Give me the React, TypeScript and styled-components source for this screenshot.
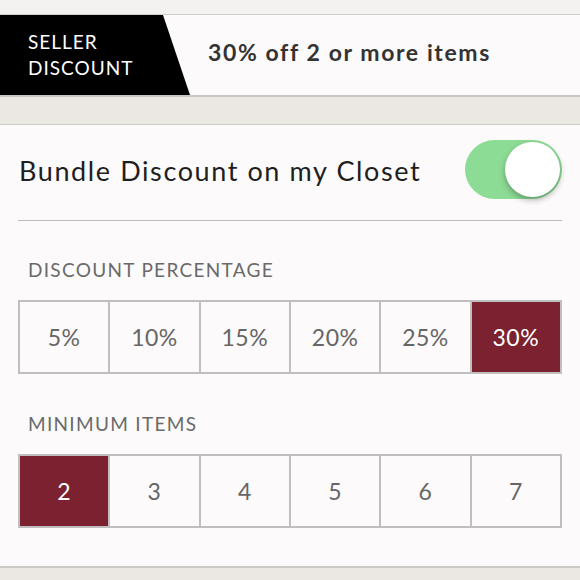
import React, { useState } from "react";
import styled, { createGlobalStyle } from "styled-components";

const GlobalStyle = createGlobalStyle`
  html, body {
    margin: 0;
    padding: 0;
    background: #ebe8e4;
    font-family: Lato, "Open Sans", sans-serif;
  }
`;

const Page = styled.div`
  width: 580px;
  height: 580px;
  overflow: hidden;
  display: flex;
  flex-direction: column;
`;

const TopStrip = styled.div`
  height: 14px;
  background: #f3f2f0;
  border-bottom: 1px solid #cfcdca;
`;

const Banner = styled.div`
  height: 80px;
  display: flex;
  align-items: center;
  background: #fcfafa;
  border-bottom: 2px solid #c9c7c4;
`;

const Tag = styled.div`
  width: 190px;
  height: 100%;
  box-sizing: border-box;
  padding-left: 28px;
  display: flex;
  flex-direction: column;
  justify-content: center;
  background: #000;
  color: #fff;
  font-size: 19px;
  line-height: 26px;
  letter-spacing: 1px;
  clip-path: polygon(0 0, 163px 0, 190px 100%, 0 100%);
`;

const Offer = styled.div`
  margin: 0 0 6px 18px;
  font-size: 23px;
  font-weight: 700;
  color: #333;
  letter-spacing: 1.6px;
`;

const Gap = styled.div`
  height: 27px;
`;

const Panel = styled.div`
  background: #fcfafa;
  border-top: 1px solid #cdcbc8;
  border-bottom: 2px solid #cdcbc8;
  padding: 0 18px 38px;
`;

const TitleRow = styled.div`
  height: 95px;
  display: flex;
  align-items: center;
  justify-content: space-between;
  border-bottom: 1px solid #bdbbbb;
`;

const Title = styled.div`
  margin-top: -5px;
  padding-left: 1px;
  font-size: 27px;
  color: #1e1e1e;
  letter-spacing: 1.6px;
`;

const Track = styled.button<{ $on: boolean }>`
  width: 97px;
  height: 59px;
  margin-top: -6px;
  border: none;
  padding: 0;
  border-radius: 30px;
  background: ${(p) => (p.$on ? "#8ddc95" : "#e0dede")};
  position: relative;
  cursor: pointer;
`;

const Knob = styled.span<{ $on: boolean }>`
  position: absolute;
  top: 2px;
  left: ${(p) => (p.$on ? "40px" : "2px")};
  width: 55px;
  height: 55px;
  border-radius: 50%;
  background: #fff;
  box-shadow: 0 3px 6px rgba(0, 0, 0, 0.3);
`;

const Label = styled.div<{ $top: number }>`
  margin: ${(p) => p.$top}px 0 20px 10px;
  font-size: 19px;
  line-height: 20px;
  color: #6a6a6a;
  letter-spacing: 1.3px;
`;

const Options = styled.div`
  display: grid;
  grid-template-columns: repeat(6, 1fr);
  gap: 2px;
  background: #c0bebe;
  border: 2px solid #c0bebe;
`;

const Option = styled.button<{ $active: boolean }>`
  height: 70px;
  border: none;
  padding: 0;
  background: ${(p) => (p.$active ? "#7b2130" : "#fcfafa")};
  color: ${(p) => (p.$active ? "#fff" : "#666")};
  font-family: inherit;
  font-size: 23px;
  letter-spacing: 0.5px;
  cursor: pointer;
`;

const percents = [5, 10, 15, 20, 25, 30];
const counts = [2, 3, 4, 5, 6, 7];

export default function App() {
  const [on, setOn] = useState(true);
  const [pct, setPct] = useState(30);
  const [min, setMin] = useState(2);

  return (
    <>
      <GlobalStyle />
      <Page>
        <TopStrip />
        <Banner>
          <Tag>
            <span>SELLER</span>
            <span>DISCOUNT</span>
          </Tag>
          <Offer>
            {pct}% off {min} or more items
          </Offer>
        </Banner>
        <Gap />
        <Panel>
          <TitleRow>
            <Title>Bundle Discount on my Closet</Title>
            <Track $on={on} onClick={() => setOn(!on)}>
              <Knob $on={on} />
            </Track>
          </TitleRow>
          <Label $top={39}>DISCOUNT PERCENTAGE</Label>
          <Options>
            {percents.map((v) => (
              <Option key={v} $active={v === pct} onClick={() => setPct(v)}>
                {v}%
              </Option>
            ))}
          </Options>
          <Label $top={40}>MINIMUM ITEMS</Label>
          <Options>
            {counts.map((v) => (
              <Option key={v} $active={v === min} onClick={() => setMin(v)}>
                {v}
              </Option>
            ))}
          </Options>
        </Panel>
      </Page>
    </>
  );
}
